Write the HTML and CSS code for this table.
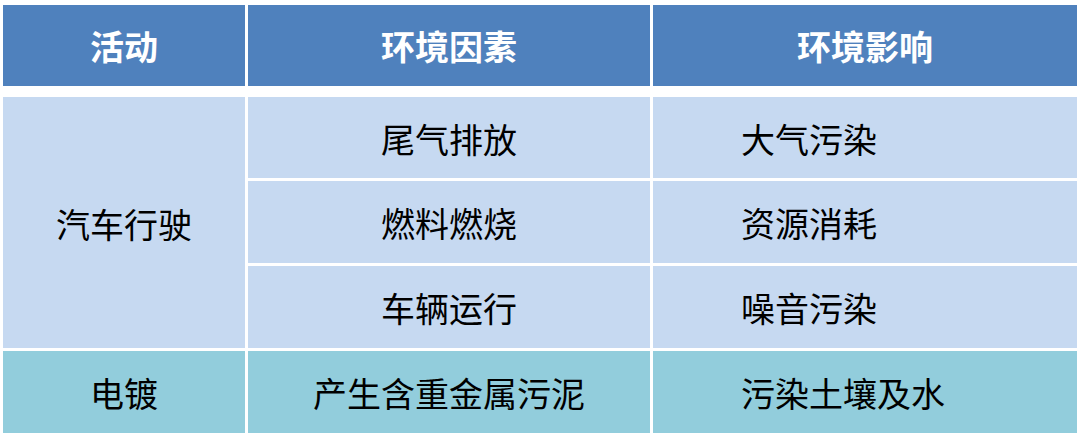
FILE: index.html
```html
<!DOCTYPE html>
<html lang="zh">
<head>
<meta charset="utf-8">
<link rel="stylesheet" href="styles.css">
</head>
<body>
<div class="table">
  <div class="head">
    <div class="cell th">活动</div>
    <div class="cell th">环境因素</div>
    <div class="cell th">环境影响</div>
  </div>
  <div class="body">
    <div class="cell td span3">汽车行驶</div>
    <div class="cell td">尾气排放</div>
    <div class="cell td left">大气污染</div>
    <div class="cell td">燃料燃烧</div>
    <div class="cell td left">资源消耗</div>
    <div class="cell td">车辆运行</div>
    <div class="cell td left">噪音污染</div>
    <div class="cell td teal">电镀</div>
    <div class="cell td teal">产生含重金属污泥</div>
    <div class="cell td teal left">污染土壤及水</div>
  </div>
</div>
</body>
</html>
```
FILE: styles.css
```css
html, body {
  margin: 0;
  padding: 0;
  background: #ffffff;
}
.table {
  padding: 5px 0 0 3px;
  font-family: "Noto Sans CJK SC", "Microsoft YaHei", sans-serif;
  font-size: 34px;
}
.head, .body {
  display: grid;
  grid-template-columns: 242px 402px 424px;
  column-gap: 3px;
}
.head {
  grid-template-rows: 81px;
}
.body {
  margin-top: 11px;
  grid-template-rows: 81px 82px 82px 82px;
  row-gap: 3px;
}
.cell {
  display: flex;
  align-items: center;
  justify-content: center;
  line-height: 1;
  padding-top: 2px;
}
.th {
  background: #4f81bd;
  color: #ffffff;
  font-weight: 700;
  padding-top: 0;
}
.td {
  background: #c6d9f1;
  color: #000000;
}
.span3 {
  grid-row: span 3;
}
.teal {
  background: #92cddc;
}
.left {
  justify-content: flex-start;
  padding-left: 88px;
}
```
